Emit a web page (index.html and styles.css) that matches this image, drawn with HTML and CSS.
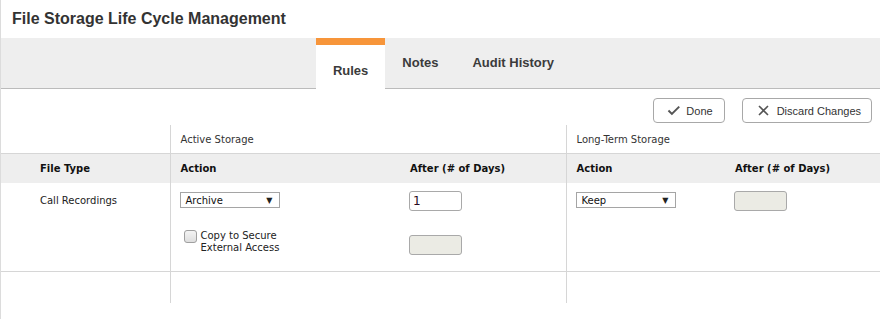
FILE: index.html
```html
<!DOCTYPE html>
<html lang="en">

<head>
    <meta charset="UTF-8">
    <title>File Storage Life Cycle Management</title>
    <link rel="stylesheet" href="styles.css">
</head>

<body>
    <div class="titolo">File Storage Life Cycle Management</div>

    <div class="tabs">
        <div class="tab attivo">Rules</div>
        <div class="tab">Notes</div>
        <div class="tab">Audit History</div>
    </div>

    <div class="azioni">
        <button class="btn">
            <svg width="14" height="11" viewBox="0 0 14 11"><polyline points="1.5,5.5 5,9 12.5,1.5" fill="none" stroke="#555" stroke-width="2"/></svg>
            Done
        </button>
        <button class="btn">
            <svg width="11" height="11" viewBox="0 0 11 11"><path d="M1,1 L10,10 M10,1 L1,10" fill="none" stroke="#555" stroke-width="1.6"/></svg>
            Discard Changes
        </button>
    </div>

    <table class="regole">
        <colgroup>
            <col style="width:169px">
            <col style="width:230px">
            <col style="width:166px">
            <col style="width:159px">
            <col>
        </colgroup>
        <tr class="gruppi">
            <td></td>
            <td class="sep" colspan="2">Active Storage</td>
            <td class="sep" colspan="2">Long-Term Storage</td>
        </tr>
        <tr class="intest">
            <th class="primo">File Type</th>
            <th class="sep">Action</th>
            <th>After (# of Days)</th>
            <th class="sep">Action</th>
            <th>After (# of Days)</th>
        </tr>
        <tr class="dati">
            <td class="primo">Call Recordings</td>
            <td class="sep">
                <div class="sel"><span>Archive</span><span class="freccia">&#9660;</span></div>
                <label class="copia">
                    <span class="check"></span>
                    <span>Copy to Secure<br>External Access</span>
                </label>
            </td>
            <td>
                <div class="campo">1</div>
                <div class="campo spento secondo"></div>
            </td>
            <td class="sep">
                <div class="sel"><span>Keep</span><span class="freccia">&#9660;</span></div>
            </td>
            <td>
                <div class="campo spento"></div>
            </td>
        </tr>
        <tr class="vuota">
            <td></td>
            <td class="sep" colspan="2"></td>
            <td class="sep" colspan="2"></td>
        </tr>
    </table>
</body>

</html>
```

FILE: styles.css
```css
html, body {
    margin: 0;
    height: 100%;
}

body {
    border-left: 1px solid #dcdcdc;
    box-sizing: border-box;
    font-family: "Liberation Sans", Arial, sans-serif;
    color: #333;
    background: #fff;
}

.titolo {
    height: 38px;
    line-height: 37px;
    padding-left: 11px;
    font-size: 16px;
    font-weight: bold;
}

.tabs {
    display: flex;
    justify-content: center;
    height: 50px;
    padding-left: 6px;
    background-color: #eee;
    border-bottom: 1px solid #bbb;
}

.tab {
    padding: 0 17px;
    line-height: 49px;
    font-size: 13px;
    font-weight: bold;
    color: #3b3b3b;
}

.tab.attivo {
    background-color: #fff;
    border-top: 7px solid #f7953a;
    padding: 6px 17px 0 17px;
    line-height: 39px;
    height: 51px;
    box-sizing: border-box;
    margin-bottom: -1px;
}

.azioni {
    display: flex;
    justify-content: flex-end;
    gap: 17px;
    height: 36px;
    padding: 9px 8px 0 0;
    box-sizing: border-box;
}

.btn {
    display: flex;
    align-items: center;
    gap: 6px;
    height: 25px;
    border: 1px solid #a8a8a8;
    border-radius: 4px;
    background: #fff;
    font-family: "Liberation Sans", Arial, sans-serif;
    font-size: 11px;
    color: #333;
}

.btn:first-child {
    padding: 0 11px 0 13px;
    width: 72px;
}

.btn:last-child {
    padding: 0 10px 0 15px;
    gap: 8px;
}

.regole {
    border-collapse: collapse;
    table-layout: fixed;
    width: 100%;
    font-family: "DejaVu Sans", Verdana, sans-serif;
    font-size: 10px;
    color: #222;
}

.regole td,
.regole th {
    padding: 0 0 0 10px;
    text-align: left;
    vertical-align: middle;
}

.regole .sep {
    border-left: 1px solid #d6d6d6;
}

.regole .primo {
    padding-left: 39px;
}

.gruppi td {
    height: 28px;
    border-bottom: 1px solid #d6d6d6;
    color: #333;
}

.intest th {
    height: 29px;
    background-color: #eee;
    font-weight: bold;
    color: #111;
}

.dati td {
    height: 88px;
    vertical-align: top;
    padding-top: 9px;
    border-bottom: 1px solid #d6d6d6;
    box-sizing: border-box;
}

.dati td.primo {
    padding-top: 12px;
}

.vuota td {
    height: 31px;
}

.sel {
    display: flex;
    justify-content: space-between;
    align-items: center;
    width: 100px;
    height: 16px;
    margin-left: -1px;
    padding: 0 6px 0 5px;
    border: 1px solid #a5a5a5;
    box-sizing: border-box;
    background: #fff;
    color: #111;
}

.freccia {
    font-size: 8px;
    color: #222;
}

.copia {
    display: flex;
    gap: 4px;
    margin: 22px 0 0 3px;
    line-height: 12px;
    color: #222;
}

.check {
    width: 13px;
    height: 13px;
    border: 1px solid #a0a0a0;
    border-radius: 3px;
    box-sizing: border-box;
    background: linear-gradient(#f4f4f4, #dedede);
}

.campo {
    width: 53px;
    height: 20px;
    margin-left: -1px;
    margin-top: -1px;
    padding-left: 3px;
    border: 1px solid #a9a9a9;
    border-radius: 3px;
    box-sizing: border-box;
    background: #fff;
    font-size: 12px;
    line-height: 18px;
    color: #2a0a20;
}

.campo.spento {
    background-color: #ebebe4;
}

.campo.secondo {
    margin-top: 24px;
}
```
